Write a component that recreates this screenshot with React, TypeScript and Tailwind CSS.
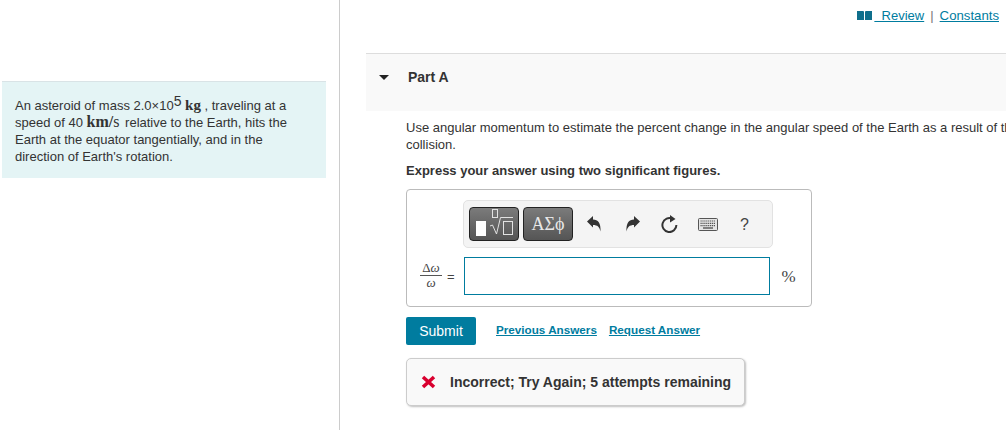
const serif = "font-['Liberation_Serif','DejaVu_Serif',serif]";

function ToolButton({ children, className }: { children: React.ReactNode; className: string }) {
  return (
    <div className={`flex items-center justify-center h-[34px] rounded-[4px] border border-[#222] bg-gradient-to-b from-[#7b7b7b] to-[#555] ${className}`}>
      {children}
    </div>
  );
}

function BookIcon() {
  return (
    <svg width="15" height="9" viewBox="0 0 15 9" className="shrink-0">
      <path d="M0 0h6.5l.5.6V9H0z" fill="#0f6f8c" />
      <path d="M15 0H8.5l-.5.6V9h7z" fill="#0f6f8c" />
    </svg>
  );
}

function KeyboardIcon() {
  return (
    <svg width="20" height="13" viewBox="0 0 20 13">
      <rect x="0.5" y="0.5" width="19" height="12" rx="1" fill="#e4e4e4" stroke="#555" />
      <path d="M2.5 3h15M2.5 5.3h15M2.5 7.6h15" stroke="#555" strokeWidth="1.2" strokeDasharray="1.2 0.7" />
      <path d="M5 10h10" stroke="#555" strokeWidth="1.4" />
    </svg>
  );
}

function UndoIcon({ flip }: { flip?: boolean }) {
  return (
    <svg width="14" height="16" viewBox="0 0 14 16" className={flip ? "-scale-x-100" : ""}>
      <path d="M0 5.500L6 0v3.500c5 0 8 3.500 7.500 12-1-4.500-3-6.500-7.500-6.500v2.500z" fill="#333" />
    </svg>
  );
}

function ResetIcon() {
  return (
    <svg width="17" height="18" viewBox="0 0 17 18">
      <path d="M11.500 3.800A7 7 0 1 0 15.400 10" fill="none" stroke="#333" strokeWidth="2" />
      <path d="M9 0l5.500 4L9 7.500z" fill="#333" />
    </svg>
  );
}

function RootIcon() {
  return (
    <div className="flex items-end gap-[3px] pb-[3px]">
      <div className="w-[10px] h-[15px] bg-white" />
      <svg width="24" height="27" viewBox="0 0 24 27">
        <rect x="3.500" y="0.500" width="5" height="8" fill="none" stroke="#e2e2e2" />
        <path d="M1 17l2.500-1 4 9L11.500 8.500H24" fill="none" stroke="#e2e2e2" />
        <rect x="14.500" y="12.500" width="9" height="13" fill="none" stroke="#e2e2e2" />
      </svg>
    </div>
  );
}

export default function App() {
  return (
    <div className="flex w-[1006px] h-[430px] overflow-hidden bg-white text-[#333] text-[13px] leading-[17px] font-['Liberation_Sans',Arial,sans-serif]">
      <div className="w-[340px] shrink-0 border-r border-[#ccc] pt-[81px] pl-[2px] pr-[13px]">
        <div className="h-[97px] bg-[#e4f4f5] border-t border-[#d9e3e6] pt-[12px] pl-[13px] pr-2">
          <p className="whitespace-nowrap">
            An asteroid of mass 2.0×10<span className="text-[14px] leading-none align-[4px]">5</span>{" "}
            <span className={`${serif} font-bold text-[15px] leading-none`}>kg</span> , traveling at a
          </p>
          <p className="whitespace-nowrap">
            speed of 40 <span className={`${serif} font-bold text-[16px] leading-none`}>km/</span>
            <span className={`${serif} text-[16px] leading-none`}>s</span>
            <span className="ml-[2px]"> relative to the Earth, hits the</span>
          </p>
          <p>Earth at the equator tangentially, and in the</p>
          <p>direction of Earth's rotation.</p>
        </div>
      </div>

      <div className="flex-1 min-w-0 pl-[26px]">
        <div className="h-[53px] flex justify-end pt-[7px] pr-[7px] text-[#007c9f]">
          <div className="flex items-center h-[16px]">
            <BookIcon />
            <a className="underline whitespace-pre text-[13px] pl-[2px]">  Review</a>
            <span className="text-[#777] px-[6px]">|</span>
            <a className="underline text-[13.200px]">Constants</a>
          </div>
        </div>

        <div className="h-[58px] bg-[#f9f9f9] border-t border-[#ddd] flex items-start pt-[14px] pl-[13px]">
          <div className="mt-[7px] w-0 h-0 border-x-[5px] border-x-transparent border-t-[5px] border-t-[#222]" />
          <div className="ml-[19px] font-bold text-[#333] text-[14px] leading-[18px]">Part A</div>
        </div>

        <div className="pl-[40px] pt-[8px]">
          <p className="whitespace-nowrap">
            Use angular momentum to estimate the percent change in the angular speed of the Earth as a result of the
          </p>
          <p>collision.</p>
          <p className="font-bold mt-[9px]">Express your answer using two significant figures.</p>

          <div className="mt-[10px] w-[406px] h-[118px] border border-[#bbb] rounded-[4px] bg-white">
            <div className="ml-[56px] mt-[10px] w-[310px] h-[48px] bg-[#f4f4f4] border border-[#e2e2e2] rounded-[5px] flex items-center pl-[5px]">
              <ToolButton className="w-[50px]"><RootIcon /></ToolButton>
              <ToolButton className={`w-[50px] ml-[4px] text-[#e8e8e8] text-[18px] ${serif}`}>ΑΣϕ</ToolButton>
              <div className="ml-[14px]"><UndoIcon /></div>
              <div className="ml-[25px]"><UndoIcon flip /></div>
              <div className="ml-[21px]"><ResetIcon /></div>
              <div className="ml-[20px]"><KeyboardIcon /></div>
              <span className="ml-[22px] text-[16px] text-[#444]">?</span>
            </div>
            <div className="flex items-center mt-[9px] pl-[13px]">
              <div className={`${serif} w-[22px] mt-[-2px] flex flex-col items-center text-[#444] text-[13px] leading-[13px]`}>
                <span>Δ<span className="italic">ω</span></span>
                <span className="w-full border-t border-[#555] mt-[1px]" />
                <span className="italic">ω</span>
              </div>
              <span className="ml-[5px] text-[#444]">=</span>
              <div className="ml-[9px] w-[306px] h-[38px] border border-[#007c9f] bg-white" />
              <span className={`${serif} ml-[12px] text-[17px] text-[#444]`}>%</span>
            </div>
          </div>

          <div className="flex items-start mt-[10px]">
            <button className="w-[70px] h-[28px] rounded-[2px] bg-[#007c9f] text-white text-[14px]">Submit</button>
            <a className="ml-[20px] mt-[4px] font-bold text-[11.700px] text-[#007c9f] underline">Previous Answers</a>
            <a className="ml-[12px] mt-[4px] font-bold text-[11.700px] text-[#007c9f] underline">Request Answer</a>
          </div>

          <div className="mt-[13px] w-[339px] h-[48px] flex items-center bg-[#f9f9f9] border border-[#ccc] rounded-[5px] shadow-[1px_1px_2px_rgba(0,0,0,0.25)] pl-[14px]">
            <svg width="15" height="14" viewBox="0 0 15 14">
              <path d="M2 2l11 10M13 2L2 12" stroke="#d9002f" strokeWidth="3.600" />
            </svg>
            <span className="ml-[14px] pt-[1px] font-bold text-[14px] text-[#333]">Incorrect; Try Again; 5 attempts remaining</span>
          </div>
        </div>
      </div>
    </div>
  );
}
